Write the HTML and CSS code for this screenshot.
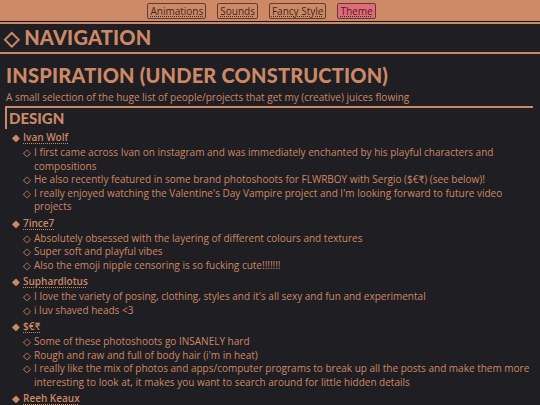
FILE: index.html
```html
<!DOCTYPE html>
<html>
<head>
<meta charset="utf-8">
<link rel="stylesheet" href="styles.css">
</head>
<body>
<div class="topbar">
  <button class="tbtn">Animations</button>
  <button class="tbtn">Sounds</button>
  <button class="tbtn">Fancy Style</button>
  <button class="tbtn active">Theme</button>
</div>
<div class="nav"><span class="navtitle">◇ NAVIGATION</span></div>
<main class="content">
  <h1 class="title">INSPIRATION (UNDER CONSTRUCTION)</h1>
  <p class="sub">A small selection of the huge list of people/projects that get my (creative) juices flowing</p>
  <h2 class="sect">DESIGN</h2>
  <ul class="people">
    <li><a class="name">Ivan Wolf</a>
      <ul class="notes">
        <li>I first came across Ivan on instagram and was immediately enchanted by his playful characters and compositions</li>
        <li>He also recently featured in some brand photoshoots for FLWRBOY with Sergio ($€₹) (see below)!</li>
        <li>I really enjoyed watching the Valentine's Day Vampire project and I'm looking forward to future video projects</li>
      </ul>
    </li>
    <li><a class="name">7ince7</a>
      <ul class="notes">
        <li>Absolutely obsessed with the layering of different colours and textures</li>
        <li>Super soft and playful vibes</li>
        <li>Also the emoji nipple censoring is so fucking cute!!!!!!!</li>
      </ul>
    </li>
    <li><a class="name">Suphardlotus</a>
      <ul class="notes">
        <li>I love the variety of posing, clothing, styles and it's all sexy and fun and experimental</li>
        <li>i luv shaved heads &lt;3</li>
      </ul>
    </li>
    <li><a class="name">$€₹</a>
      <ul class="notes">
        <li>Some of these photoshoots go INSANELY hard</li>
        <li>Rough and raw and full of body hair (i'm in heat)</li>
        <li>I really like the mix of photos and apps/computer programs to break up all the posts and make them more interesting to look at, it makes you want to search around for little hidden details</li>
      </ul>
    </li>
    <li><a class="name">Reeh Keaux</a></li>
  </ul>
</main>
</body>
</html>
```
FILE: styles.css
```css
html, body {
  margin: 0;
  padding: 0;
}
body {
  background: #1f1e23;
  color: #cd8865;
  font-family: "Open Sans", Lato, sans-serif;
  font-size: 10px;
  line-height: 13.5px;
}
.topbar {
  background: #cd8865;
  height: 21px;
  display: flex;
  justify-content: center;
  align-items: center;
  gap: 11px;
  padding-right: 17px;
  border-bottom: 1px solid #141316;
}
.tbtn {
  font-family: "Open Sans", Lato, sans-serif;
  font-size: 10px;
  line-height: 12px;
  color: #3a2a25;
  background: #cd8865;
  border: 1px solid #5e3e30;
  border-radius: 2px;
  padding: 1px 2px;
  text-decoration: underline dotted;
  text-underline-offset: 1px;
}
.tbtn.active {
  background: #e4697b;
}
.nav {
  border-top: 2px solid #cd8865;
  border-bottom: 2px solid #cd8865;
  height: 28px;
  display: flex;
  align-items: center;
  padding-left: 4px;
}
.navtitle {
  font-family: Lato, sans-serif;
  font-size: 20px;
  font-weight: 900;
  letter-spacing: 0.2px;
}
.content {
  padding: 0 7px 0 5px;
}
.title {
  font-family: Lato, sans-serif;
  margin: 8px 0 0 1px;
  font-size: 20px;
  line-height: 26px;
  font-weight: 900;
  letter-spacing: 0.2px;
}
.sub {
  margin: 3px 0 0 1px;
  line-height: 13px;
}
.sect {
  font-family: Lato, sans-serif;
  margin: 2px 0 0 0;
  border-top: 2px solid #cd8865;
  border-left: 2px solid #cd8865;
  font-size: 15px;
  line-height: 21px;
  font-weight: 900;
  padding-left: 2px;
}
.people {
  list-style-type: "◆ ";
  margin: 2px 0 0 0;
  padding-left: 18px;
}
.people > li {
  margin-bottom: 3px;
}
.people > li::marker {
  font-size: 10px;
}
.name {
  text-decoration: underline dotted;
  text-underline-offset: 2px;
  font-weight: 600;
}
.notes {
  list-style-type: "◇ ";
  margin: 1.5px 0 0 0;
  padding-left: 11px;
}
.notes li::marker {
  font-size: 10px;
}
```
